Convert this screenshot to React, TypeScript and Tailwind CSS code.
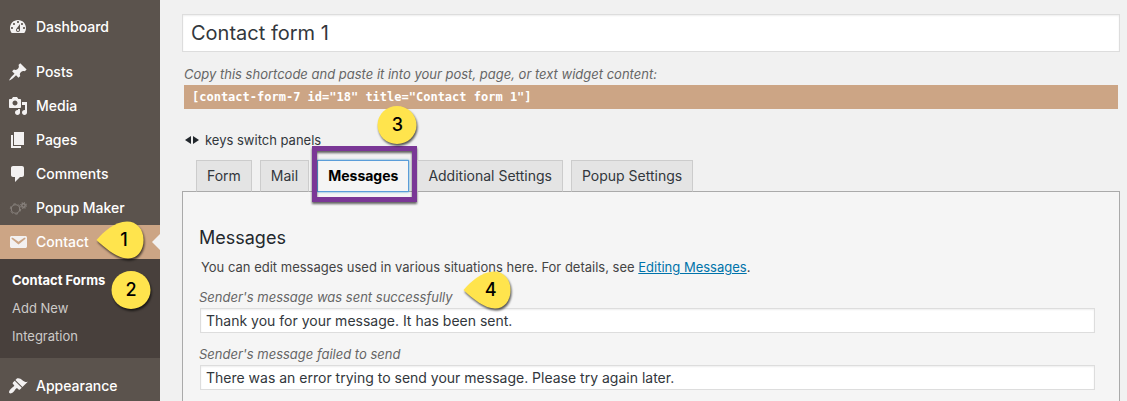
import React, { useState } from 'react';
import { clsx } from 'clsx';

interface MenuItem {
  id: string;
  label: string;
  icon: React.ReactNode;
}

interface MessageField {
  id: string;
  label: string;
  value: string;
  step?: string;
}

const Icon = ({ d }: { d: string }) => (
  <svg viewBox="0 0 20 20" className="size-5 shrink-0 fill-[#f3f1f1]" aria-hidden="true">
    <path d={d} fillRule="evenodd" />
  </svg>
);

const PopupIcon = () => (
  <svg viewBox="0 0 20 20" className="size-5 shrink-0" fill="none" stroke="#88827d" aria-hidden="true">
    <circle cx="7.5" cy="11" r="4.2" strokeWidth="1.1" />
    <circle cx="7.5" cy="11" r="5.2" strokeWidth="1" strokeDasharray="2.6 2.8" />
    <circle cx="15.5" cy="7.5" r="1.7" strokeWidth="1.4" />
    <circle cx="15.5" cy="7.5" r="2.8" strokeWidth="1.3" strokeDasharray="1.1 1.1" />
  </svg>
);

const dashboardItem: MenuItem = {
  id: 'dashboard',
  label: 'Dashboard',
  icon: (
    <Icon d="M3.76 16h12.48c1.1-1.37 1.76-3.11 1.76-5 0-4.42-3.58-8-8-8s-8 3.58-8 8c0 1.89.66 3.63 1.76 5zM10 4c.55 0 1 .45 1 1s-.45 1-1 1-1-.45-1-1 .45-1 1-1zM6 6c.55 0 1 .45 1 1s-.45 1-1 1-1-.45-1-1 .45-1 1-1zm8 0c.55 0 1 .45 1 1s-.45 1-1 1-1-.45-1-1 .45-1 1-1zm-5.37 5.55L12 7v6c0 1.1-.9 2-2 2s-2-.9-2-2c0-.57.24-1.08.63-1.45zM4 10c.55 0 1 .45 1 1s-.45 1-1 1-1-.45-1-1 .45-1 1-1zm12 0c.55 0 1 .45 1 1s-.45 1-1 1-1-.45-1-1 .45-1 1-1zm-5 3c0-.55-.45-1-1-1s-1 .45-1 1 .45 1 1 1 1-.45 1-1z" />
  ),
};

const contentItems: MenuItem[] = [
  {
    id: 'posts',
    label: 'Posts',
    icon: (
      <Icon d="M10.44 3.02l1.82-1.82 6.36 6.35-1.83 1.82c-1.05-.68-2.48-.57-3.41.36l-.75.75c-.92.93-1.04 2.35-.35 3.41l-1.83 1.82-2.41-2.41-2.8 2.79c-.42.42-3.38 2.71-3.8 2.29s1.86-3.39 2.28-3.81l2.79-2.79L4.1 9.36l1.83-1.82c1.05.69 2.48.57 3.4-.36l.75-.75c.93-.92 1.05-2.35.36-3.41z" />
    ),
  },
  {
    id: 'media',
    label: 'Media',
    icon: (
      <Icon d="M13 11V4c0-.55-.45-1-1-1h-1.67L9 1H5L3.67 3H2c-.55 0-1 .45-1 1v7c0 .55.45 1 1 1h10c.55 0 1-.45 1-1zM7 4.5c1.38 0 2.5 1.12 2.5 2.5S8.38 9.5 7 9.5 4.5 8.38 4.5 7 5.62 4.5 7 4.5zM14 6h5v10.5c0 1.38-1.12 2.5-2.5 2.5S14 17.88 14 16.5s1.12-2.5 2.5-2.5c.17 0 .34.02.5.05V9h-3V6zm-4 8.05V13h2v3.5c0 1.38-1.12 2.5-2.5 2.5S7 17.88 7 16.5 8.12 14 9.5 14c.17 0 .34.02.5.05z" />
    ),
  },
  { id: 'pages', label: 'Pages', icon: <Icon d="M6 15V2h10v13H6zm-1 1h8v2H3V5h2v11z" /> },
  {
    id: 'comments',
    label: 'Comments',
    icon: <Icon d="M5 2h9c1.1 0 2 .9 2 2v7c0 1.1-.9 2-2 2h-2l-5 5v-5H5c-1.1 0-2-.9-2-2V4c0-1.1.9-2 2-2z" />,
  },
  { id: 'popup-maker', label: 'Popup Maker', icon: <PopupIcon /> },
  {
    id: 'contact',
    label: 'Contact',
    icon: (
      <Icon d="M3.87 4h13.25C18.37 4 19 4.59 19 5.79v8.42c0 1.19-.63 1.79-1.88 1.79H3.87c-1.25 0-1.88-.6-1.88-1.79V5.79c0-1.2.63-1.79 1.88-1.79zm6.62 8.6l6.74-5.53c.24-.2.43-.66.13-1.07-.29-.41-.82-.42-1.17-.17l-5.7 3.86L4.8 5.83c-.35-.25-.88-.24-1.17.17-.3.41-.11.87.13 1.07z" />
    ),
  },
];

const appearanceItem: MenuItem = {
  id: 'appearance',
  label: 'Appearance',
  icon: (
    <Icon d="M14.48 11.06L7.41 3.99l1.5-1.5c.5-.56 2.3-.47 3.51.32 1.21.8 1.43 1.28 2.91 2.1 1.18.64 2.45 1.26 4.45.85zm-.71.71L6.7 4.7 4.93 6.47c-.39.39-.39 1.02 0 1.41l1.06 1.06c.39.39.39 1.03 0 1.42-.6.6-1.43 1.11-2.21 1.69-.35.26-.7.53-1.01.84C1.43 14.23.4 16.08 1.4 17.07c.99 1 2.84-.03 4.18-1.36.31-.31.58-.66.85-1.02.57-.78 1.08-1.61 1.69-2.21.39-.39 1.02-.39 1.41 0l1.06 1.06c.39.39 1.02.39 1.41 0z" />
  ),
};

const submenu = ['Contact Forms', 'Add New', 'Integration'];
const tabs = ['Form', 'Mail', 'Messages', 'Additional Settings', 'Popup Settings'];

const messageFields: MessageField[] = [
  {
    id: 'mail-sent-ok',
    label: "Sender's message was sent successfully",
    value: 'Thank you for your message. It has been sent.',
    step: '4',
  },
  {
    id: 'mail-sent-ng',
    label: "Sender's message failed to send",
    value: 'There was an error trying to send your message. Please try again later.',
  },
];

// Numbered step marker, either a disc or a drop that points left
const Marker = ({ step, pointer = false, className }: { step: string; pointer?: boolean; className?: string }) => (
  <span
    className={clsx(
      'pointer-events-none absolute z-10 flex h-10 items-center justify-center text-lg font-medium text-black not-italic',
      pointer ? 'w-12 pl-2' : 'w-10',
      className,
    )}
  >
    <svg
      viewBox={pointer ? '0 0 48 40' : '0 0 40 40'}
      className="absolute inset-0 size-full overflow-visible fill-[#ffe44d] drop-shadow-[1px_2px_1px_rgba(0,0,0,0.65)]"
      aria-hidden="true"
    >
      {pointer ? (
        <path d="M0.500 20C7 12 19 1.500 31 1.500C40.500 1.500 47.500 9 47.500 20C47.500 31 41 38.500 32 38.500C22 38.500 10 29 0.500 20Z" />
      ) : (
        <ellipse cx="20" cy="20" rx="19.5" ry="19" />
      )}
    </svg>
    <span className="relative">{step}</span>
  </span>
);

const MenuLink = ({ item, current = false }: { item: MenuItem; current?: boolean }) => (
  <a
    href={`#${item.id}`}
    className={clsx('relative flex h-[34px] items-center gap-2 pl-2 text-sm font-medium text-white', current && 'bg-[#cca585]')}
  >
    {item.icon}
    {item.label}
    {current && (
      <>
        <span className="absolute right-0 border-8 border-transparent border-r-[#f1f1f1]" />
        <Marker step="1" pointer className="-top-[5px] left-24" />
      </>
    )}
  </a>
);

const Sidebar = () => (
  <nav className="w-40 shrink-0 bg-[#5b534d] pt-2.5">
    <MenuLink item={dashboardItem} />
    <div className="pt-[11px]">
      {contentItems.map((item) => (
        <MenuLink key={item.id} item={item} current={item.id === 'contact'} />
      ))}
    </div>
    <ul className="relative bg-[#48403c] px-3 pt-[7px] pb-2 text-[13px] leading-7">
      {submenu.map((label, index) => (
        <li key={label}>
          <a href="#contact" className={index === 0 ? 'font-bold text-white' : 'text-[#cdcbc9]'}>
            {label}
          </a>
        </li>
      ))}
      <Marker step="2" className="top-[11px] left-[111px]" />
    </ul>
    <div className="pt-[11px]">
      <MenuLink item={appearanceItem} />
    </div>
  </nav>
);

const inputStyle = 'block w-full border border-[#ddd] bg-white text-[#32373c] shadow-[inset_0_1px_2px_rgba(0,0,0,0.07)]';

export default function App() {
  const [activeTab, setActiveTab] = useState('Messages');

  return (
    <div className="flex h-screen overflow-hidden bg-[#f1f1f1] font-['Inter',sans-serif] text-sm text-[#32373c]">
      <Sidebar />

      <main className="flex min-w-0 flex-1 flex-col pt-3.5 pr-[7px] pl-[22px]">
        <input
          aria-label="Form title"
          defaultValue="Contact form 1"
          className={clsx(inputStyle, 'h-[38px] shrink-0 px-2 text-xl')}
        />

        <div className="mt-3 px-0.5">
          <label htmlFor="shortcode" className="block text-[13px] leading-5 text-[#666] italic">
            Copy this shortcode and paste it into your post, page, or text widget content:
          </label>
          <input
            id="shortcode"
            readOnly
            value={'[contact-form-7 id="18" title="Contact form 1"]'}
            className="mt-px block h-6 w-full bg-[#cca585] px-2 font-['DejaVu_Sans_Mono',monospace] text-xs font-bold text-white"
          />
        </div>

        <p className="mt-[21px] flex items-center gap-[5px] pl-0.5 text-[13px] leading-5">
          <svg viewBox="0 0 16 10" className="h-2.5 w-4 fill-[#23282d]" aria-hidden="true">
            <path d="M7 1v8L1 5zM9 1v8l6-4z" />
          </svg>
          keys switch panels
        </p>

        <div role="tablist" className="relative z-10 mt-2.5 -mb-px flex gap-2 pl-3.5">
          {tabs.map((tab) => (
            <div key={tab} className="relative">
              <button
                type="button"
                role="tab"
                aria-selected={tab === activeTab}
                onClick={() => setActiveTab(tab)}
                className={clsx(
                  'h-8 border px-2.5 whitespace-nowrap',
                  tab === activeTab
                    ? 'border-[#5b9dd9] bg-[#f5f5f5] font-bold text-black shadow-[0_0_2px_rgba(30,140,190,0.8)]'
                    : 'border-[#ccc] border-b-[#aaa] bg-[#e4e4e4]',
                )}
              >
                {tab}
              </button>
              {tab === 'Messages' && (
                <>
                  <span className="pointer-events-none absolute -top-3.5 -right-2 -bottom-2.5 -left-[5px] border-[5px] border-[#7a3796] drop-shadow-[0_2px_1px_rgba(0,0,0,0.6)]" />
                  <Marker step="3" className="-top-[55px] -right-2" />
                </>
              )}
            </div>
          ))}
        </div>

        <section className="flex-1 border border-b-0 border-[#aaa] bg-[#f5f5f5] pt-9 pr-6 pl-4">
          <h2 className="text-lg leading-5 text-[#23282d]">{activeTab}</h2>
          <p className="mt-[9px] pl-0.5 text-[13px] leading-5 text-[#444]">
            You can edit messages used in various situations here. For details, see{' '}
            <a href="#editing-messages" className="text-[#0073aa] underline">
              Editing Messages
            </a>
            .
          </p>
          <div className="mt-2.5 flex flex-col gap-[11px]">
            {messageFields.map((field) => (
              <div key={field.id}>
                <label htmlFor={field.id} className="relative mb-px inline-block align-top text-[13px] leading-5 text-[#666] italic">
                  {field.label}
                  {field.step && <Marker step={field.step} pointer className="-top-[17px] left-full ml-2.5" />}
                </label>
                <div className="pl-px">
                  <input id={field.id} defaultValue={field.value} className={clsx(inputStyle, 'h-[25px] px-[5px]')} />
                </div>
              </div>
            ))}
          </div>
        </section>
      </main>
    </div>
  );
}
